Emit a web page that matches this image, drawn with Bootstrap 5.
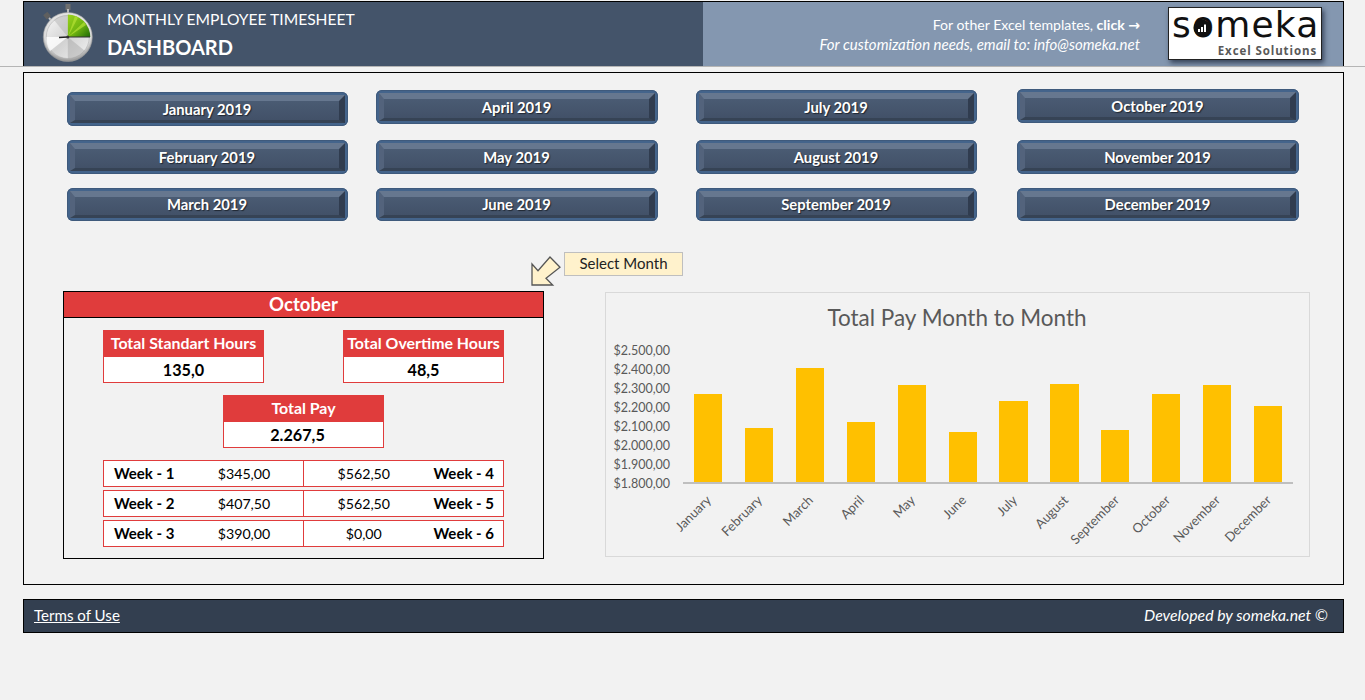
<!DOCTYPE html>
<html lang="en">
<head>
<meta charset="utf-8">
<title>Monthly Employee Timesheet</title>
<link href="https://cdn.jsdelivr.net/npm/bootstrap@5.3.0/dist/css/bootstrap.min.css" rel="stylesheet">
<style>
html,body{height:700px;overflow:hidden}
body{background:#f2f2f2;font-family:Lato,"Liberation Sans",sans-serif;color:#000;font-size:15px}
.page-w{width:1321px;margin-left:23px}
.hdr{height:65px;margin-top:1px;border:1px solid #000;border-bottom:0;background:#44546a;color:#fff}
.hdr-left{width:679px}
.hdr-right{flex:1;background:#8497b0;padding-right:21px}
.watch{margin-left:14px;margin-right:9px;flex:none}
.hdr-t1{font-size:15.6px;line-height:20px;margin-top:7px}
.hdr-t2{font-size:20px;line-height:26px;font-weight:700;margin-top:5px}
.hdr-links{line-height:19px;margin-right:28px;text-align:right}
.hdr-l1{font-size:14.1px}
.hdr-l2{font-size:15px;font-style:italic}
.hdr-arrow{font-family:"DejaVu Sans",sans-serif;font-weight:700}
.logo-box{width:154px;height:53px;margin-top:-1px;background:#fff;border:1px solid #222;box-shadow:2px 3px 5px rgba(30,40,60,.75);position:relative;color:#111}
.logo-word{font-family:"DejaVu Sans",sans-serif;font-size:36px;line-height:34px;letter-spacing:1.2px;position:absolute;left:3px;top:0;white-space:nowrap}
.logo-sub{font-family:"Open Sans",sans-serif;font-weight:700;font-size:11.5px;line-height:14px;letter-spacing:.9px;color:#595959;position:absolute;right:4px;top:36px;white-space:nowrap}
.logo-dot{position:absolute;left:24px;top:11px}
.hrule{height:1px;background:#b5b5b5}
.mainbox{height:513px;margin-top:5px;border:1px solid #000}
.months{padding-left:43px}
.mcol{width:281px;flex:none}
.mcol-1{padding-top:19px;gap:14px}
.mcol-2{width:282px;margin-left:28px;padding-top:17px;gap:16px}
.mcol-3{margin-left:38px;padding-top:17px;gap:16px}
.mcol-4{width:282px;margin-left:40px;padding-top:16px;gap:17px}
.mbtn{display:block;width:100%;height:34px;padding:3px;border:0;border-radius:6px;background:#44648b;box-shadow:inset 0 0 0 1px #3f5a7c}
.mbtn.short{height:33px}
.mcol-2 .short,.mcol-3 .short{margin-top:-2px}
.mcol-4 .short{margin-top:-3px}
.mbtn-in{display:flex;align-items:center;justify-content:center;height:100%;padding-bottom:3px;border-style:solid;border-width:6px 6px 3px 5px;border-color:#66778f #303c4f #364355 #53637c;background:linear-gradient(#4a5b73,#425168);color:#fff;font-weight:700;font-size:14.8px;line-height:1;text-shadow:1px 1px 1px rgba(0,0,0,.55)}
.hint-row{margin-top:31px;padding-left:507px}
.hint-arrow{margin-top:4px;flex:none}
.hint-box{width:119px;height:24px;margin-left:3px;background:#fff2cc;border:1px solid #bfbfbf;font-size:15px;line-height:20px;color:#222;text-align:center}
.lower{margin-top:5px;padding-left:39px}
.panel-r{width:481px;height:268px;border:1px solid #000;flex:none}
.panel-h{height:26px;background:#e03c3c;border-bottom:1px solid #000;color:#fff;font-size:18.6px;line-height:25px;font-weight:700;text-align:center}
.panel-b{width:401px;margin-left:39px}
.kpi-row{margin-top:12px}
.kpi{width:161px;height:53px;border:1px solid #e03c3c;background:#fff}
.kpi-h{height:27px;margin:-1px -1px 0;background:#e03c3c;color:#fff;font-weight:700;font-size:15.9px;line-height:26px;text-align:center;white-space:nowrap}
.kpi-v{font-weight:700;font-size:16.2px;line-height:25px;text-align:center;color:#000}
.kpi-v-off{padding-right:12px}
.wkrow-set{margin-top:12px}
.wkrow{height:27px;border:1px solid #e03c3c !important;background:#fff;font-size:14.2px;line-height:25px}
.wkrow+.wkrow{margin-top:3px}
.wk-half{width:200px}
.wk-half+.wk-half{border-left:1px solid #e03c3c !important}
.wk-l{width:100px;padding-left:10px;font-weight:700;font-size:15px}
.wk-v{width:80px;text-align:center}
.wk-v2{margin-left:20px}
.wk-r{width:100px;padding-right:9px;text-align:right;font-weight:700;font-size:15px}
.chartbox{width:705px;height:265px;margin-left:61px;margin-top:1px;border:1px solid #d9d9d9;flex:none}
.chartbox svg{display:block}
.chartbox text{font-family:Lato,"Liberation Sans",sans-serif;fill:#595959}
.ftr{height:34px;margin-top:14px;background:#333f50;border:1px solid #000;color:#fff;font-size:15.1px;padding:0 15px 2px 10px}
.ftr a{color:#fff}
.ftr-r{font-style:italic;font-size:15.8px}
</style>
</head>
<body>
<header class="page-w hdr d-flex">
  <div class="hdr-left d-flex">
    <svg class="watch" width="60" height="64" viewBox="38 1 60 64" role="img" aria-label="Stopwatch">
      <defs>
        <radialGradient id="rim" cx="50%" cy="40%" r="60%"><stop offset="0" stop-color="#fafafa"/><stop offset=".8" stop-color="#dcdcdc"/><stop offset="1" stop-color="#8d8d8d"/></radialGradient>
        <linearGradient id="silver" x1="0" y1="0" x2="1" y2="1"><stop offset="0" stop-color="#f8f8f8"/><stop offset=".5" stop-color="#d2d2d2"/><stop offset="1" stop-color="#f2f2f2"/></linearGradient>
        <linearGradient id="grn" x1="0" y1="0" x2="1" y2="1"><stop offset="0" stop-color="#9ad21e"/><stop offset=".55" stop-color="#6fb410"/><stop offset="1" stop-color="#1d6a05"/></linearGradient>
      </defs>
      <rect x="65.500" y="3" width="5" height="6" fill="#6e6e6e"/>
      <rect x="67" y="8" width="2" height="4" fill="#bbb"/>
      <rect x="44.500" y="12" width="5.500" height="5.500" transform="rotate(-40 47 15)" fill="#5f5f5f"/>
      <line x1="49" y1="17" x2="53" y2="21" stroke="#c4c4c4" stroke-width="2"/>
      <circle cx="67.800" cy="36" r="24.500" fill="url(#rim)" stroke="#a0a0a0" stroke-width=".6"/>
      <circle cx="67.800" cy="36" r="21.500" fill="url(#silver)" stroke="#a8a8a8" stroke-width=".5"/>
      <path d="M67.800 36 L50 50 A22 22 0 0 1 46.500 36 Z" fill="#ffffff" opacity=".8"/>
      <path d="M67.800 36 L54 19 A22 22 0 0 1 67.800 14 Z" fill="#b0b0b0" opacity=".45"/>
      <path d="M67.800 36 L67.800 58 A22 22 0 0 0 85 50 Z" fill="#a5a5a5" opacity=".45"/>
      <path d="M67.800 36 L67.800 13.500 A22.500 22.500 0 0 1 90.300 36 Z" fill="url(#grn)"/>
      <path d="M67.800 36 L75 15 L78 16.500 Z M67.800 36 L84 21 L86 24 Z" fill="#b8e438" opacity=".65"/>
      <line x1="59" y1="36.500" x2="67.800" y2="36" stroke="#222" stroke-width="1.500"/>
      <line x1="67.800" y1="36" x2="90" y2="36" stroke="#333" stroke-width="1"/>
      <circle cx="67.800" cy="36" r="1.500" fill="#333"/>
    </svg>
    <div>
      <div class="hdr-t1">MONTHLY EMPLOYEE TIMESHEET</div>
      <div class="hdr-t2">DASHBOARD</div>
    </div>
  </div>
  <div class="hdr-right d-flex justify-content-end align-items-center">
    <div class="hdr-links">
      <div class="hdr-l1">For other Excel templates, <b>click <span class="hdr-arrow">→</span></b></div>
      <div class="hdr-l2">For customization needs, email to: info@someka.net</div>
    </div>
    <div class="logo-box">
      <div class="logo-word">someka</div>
      <svg class="logo-dot" width="18" height="18" viewBox="0 0 18 18" aria-hidden="true"><circle cx="9" cy="9" r="8.500" fill="#111"/><rect x="5" y="10" width="2" height="3" fill="#fff"/><rect x="8" y="8" width="2" height="5" fill="#fff"/><rect x="11" y="5.500" width="2" height="7.500" fill="#fff"/></svg>
      <div class="logo-sub">Excel Solutions</div>
    </div>
  </div>
</header>
<div class="hrule"></div>
<main class="page-w mainbox">
  <div class="months d-flex">
    <div class="mcol mcol-1 d-flex flex-column">
      <button class="mbtn"><span class="mbtn-in">January 2019</span></button>
      <button class="mbtn"><span class="mbtn-in">February 2019</span></button>
      <button class="mbtn short"><span class="mbtn-in">March 2019</span></button>
    </div>
    <div class="mcol mcol-2 d-flex flex-column">
      <button class="mbtn"><span class="mbtn-in">April 2019</span></button>
      <button class="mbtn"><span class="mbtn-in">May 2019</span></button>
      <button class="mbtn short"><span class="mbtn-in">June 2019</span></button>
    </div>
    <div class="mcol mcol-3 d-flex flex-column">
      <button class="mbtn"><span class="mbtn-in">July 2019</span></button>
      <button class="mbtn"><span class="mbtn-in">August 2019</span></button>
      <button class="mbtn short"><span class="mbtn-in">September 2019</span></button>
    </div>
    <div class="mcol mcol-4 d-flex flex-column">
      <button class="mbtn"><span class="mbtn-in">October 2019</span></button>
      <button class="mbtn"><span class="mbtn-in">November 2019</span></button>
      <button class="mbtn short"><span class="mbtn-in">December 2019</span></button>
    </div>
  </div>
  <div class="hint-row d-flex">
    <svg class="hint-arrow" width="30" height="30" viewBox="0 0 30 30" aria-hidden="true"><polygon points="1,29 1,8 7,14.700 19,1 29,11.300 15,22.300 21.700,29" fill="#fff2cc" stroke="#555" stroke-width="1.300"/></svg>
    <div class="hint-box">Select Month</div>
  </div>
  <div class="lower d-flex">
    <section class="panel-r">
      <div class="panel-h">October</div>
      <div class="panel-b">
        <div class="kpi-row d-flex justify-content-between">
          <div class="kpi"><div class="kpi-h">Total Standart Hours</div><div class="kpi-v">135,0</div></div>
          <div class="kpi"><div class="kpi-h">Total Overtime Hours</div><div class="kpi-v">48,5</div></div>
        </div>
        <div class="kpi-row d-flex justify-content-center">
          <div class="kpi"><div class="kpi-h">Total Pay</div><div class="kpi-v kpi-v-off">2.267,5</div></div>
        </div>
        <div class="wkrow-set">
          <div class="wkrow d-flex">
            <div class="wk-half d-flex"><div class="wk-l">Week - 1</div><div class="wk-v">$345,00</div></div>
            <div class="wk-half d-flex"><div class="wk-v wk-v2">$562,50</div><div class="wk-r">Week - 4</div></div>
          </div>
          <div class="wkrow d-flex">
            <div class="wk-half d-flex"><div class="wk-l">Week - 2</div><div class="wk-v">$407,50</div></div>
            <div class="wk-half d-flex"><div class="wk-v wk-v2">$562,50</div><div class="wk-r">Week - 5</div></div>
          </div>
          <div class="wkrow d-flex">
            <div class="wk-half d-flex"><div class="wk-l">Week - 3</div><div class="wk-v">$390,00</div></div>
            <div class="wk-half d-flex"><div class="wk-v wk-v2">$0,00</div><div class="wk-r">Week - 6</div></div>
          </div>
        </div>
      </div>
    </section>
    <section class="chartbox">
      <svg width="703" height="263" viewBox="606 293 703 263" role="img" aria-label="Total Pay Month to Month">
        <text x="957" y="326" text-anchor="middle" font-size="22.500">Total Pay Month to Month</text>
        <g font-size="12.500" text-anchor="end">
          <text x="670" y="355">$2.500,00</text><text x="670" y="374">$2.400,00</text><text x="670" y="393">$2.300,00</text><text x="670" y="412">$2.200,00</text><text x="670" y="431">$2.100,00</text><text x="670" y="450">$2.000,00</text><text x="670" y="469">$1.900,00</text><text x="670" y="488">$1.800,00</text>
        </g>
        <g fill="#ffc000">
          <rect x="694" y="394" width="28" height="88"/><rect x="745" y="428" width="28" height="54"/><rect x="796" y="368" width="28" height="114"/><rect x="847" y="422" width="28" height="60"/><rect x="898" y="385" width="28" height="97"/><rect x="949" y="432" width="28" height="50"/><rect x="999" y="401" width="29" height="81"/><rect x="1050" y="384" width="29" height="98"/><rect x="1101" y="430" width="28" height="52"/><rect x="1152" y="394" width="28" height="88"/><rect x="1203" y="385" width="28" height="97"/><rect x="1254" y="406" width="28" height="76"/>
        </g>
        <rect x="683" y="482" width="610" height="2" fill="#bfbfbf"/>
        <g font-size="13" text-anchor="end">
          <text transform="translate(712 501) rotate(-45)">January</text>
          <text transform="translate(763 501) rotate(-45)">February</text>
          <text transform="translate(814 501) rotate(-45)">March</text>
          <text transform="translate(865 501) rotate(-45)">April</text>
          <text transform="translate(916 501) rotate(-45)">May</text>
          <text transform="translate(967 501) rotate(-45)">June</text>
          <text transform="translate(1018 501) rotate(-45)">July</text>
          <text transform="translate(1069 501) rotate(-45)">August</text>
          <text transform="translate(1120 501) rotate(-45)">September</text>
          <text transform="translate(1171 501) rotate(-45)">October</text>
          <text transform="translate(1221 501) rotate(-45)">November</text>
          <text transform="translate(1272 501) rotate(-45)">December</text>
        </g>
      </svg>
    </section>
  </div>
</main>
<footer class="page-w ftr d-flex justify-content-between align-items-center">
  <a href="#">Terms of Use</a>
  <div class="ftr-r">Developed by someka.net ©</div>
</footer>
<script src="https://cdn.jsdelivr.net/npm/bootstrap@5.3.0/dist/js/bootstrap.bundle.min.js"></script>
</body>
</html>
